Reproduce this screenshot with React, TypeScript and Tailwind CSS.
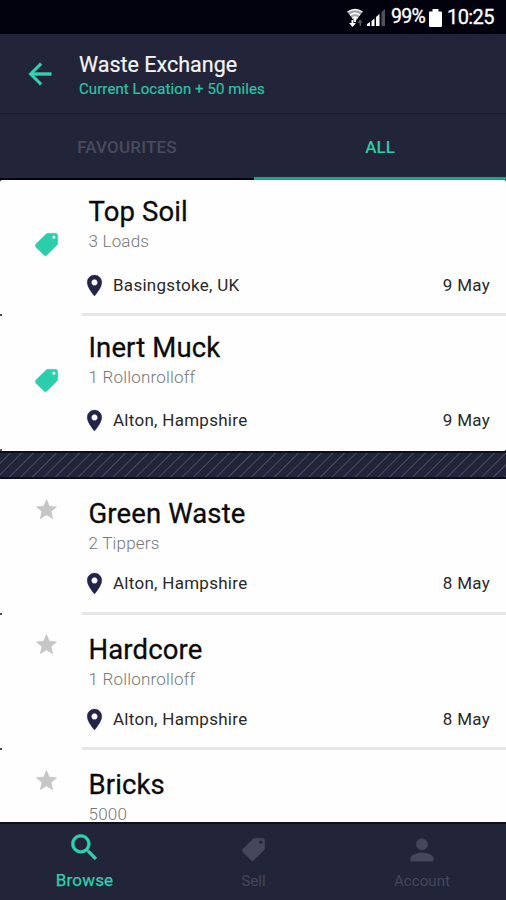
import React from 'react';

const ARROW = 'M20 11H7.83l5.59-5.59L12 4l-8 8 8 8 1.41-1.41L7.83 13H20v-2z';
const TAG =
  'M21.41 11.58l-9-9C12.05 2.22 11.55 2 11 2H4c-1.1 0-2 .9-2 2v7c0 .55.22 1.05.59 1.42l9 9c.36.36.86.58 1.41.58.55 0 1.05-.22 1.41-.59l7-7c.37-.36.59-.86.59-1.41 0-.55-.23-1.06-.59-1.42zM5.5 7C4.67 7 4 6.33 4 5.5S4.67 4 5.5 4 7 4.67 7 5.500 6.33 7 5.5 7z';
const PIN =
  'M12 2C8.13 2 5 5.13 5 9c0 5.25 7 13 7 13s7-7.75 7-13c0-3.87-3.13-7-7-7zm0 10c-1.660 0-3-1.340-3-3s1.340-3 3-3 3 1.340 3 3-1.340 3-3 3z';
const STAR = 'M12 17.27L18.18 21l-1.64-7.03L22 9.24l-7.19-.61L12 2 9.19 8.63 2 9.24l5.46 4.73L5.82 21z';
const SEARCH =
  'M15.5 14h-.79l-.28-.27C15.41 12.59 16 11.11 16 9.5 16 5.91 13.09 3 9.5 3S3 5.91 3 9.5 5.91 16 9.5 16c1.61 0 3.09-.59 4.23-1.57l.27.28v.79l5 4.99L20.49 19l-4.99-5zm-6 0C7.01 14 5 11.99 5 9.5S7.01 5 9.5 5 14 7.01 14 9.5 11.99 14 9.5 14z';
const PERSON =
  'M12 12c2.21 0 4-1.79 4-4s-1.79-4-4-4-4 1.79-4 4 1.79 4 4 4zm0 2c-2.67 0-8 1.34-8 4v2h16v-2c0-2.66-5.33-4-8-4z';

function Icon({ d, className }: { d: string; className: string }) {
  return (
    <svg viewBox="0 0 24 24" fill="currentColor" stroke="currentColor" strokeWidth="0.3" className={className}>
      <path d={d} />
    </svg>
  );
}

function StatusBar() {
  return (
    <div className="flex h-[34px] shrink-0 items-center justify-end bg-[#02020f] pr-[11px] text-white">
      <svg viewBox="0 0 18 20" className="mt-[2px] mr-[2px] h-[20px] w-[18px]">
        <path d="M1.5 4Q9-1 16.500 4L9 14Z" fill="#a5a5ad" />
        <path d="M1.500 4Q9-1 16.500 4M4 7.200Q9 3.500 14 7.200M6.300 10.300Q9 8 11.700 10.300" fill="none" stroke="#fff" strokeWidth="1.500" />
        <path d="M9 10v4" stroke="#fff" strokeWidth="2" />
        <path d="M5.500 12v3H3l3.500 4 3.500-4H7.500v-3z" fill="#fff" />
        <path d="M13.500 18v-3H11.500l2.500-4 2.500 4H15v3z" fill="#54545e" />
      </svg>
      <svg viewBox="0 0 20 18" className="mt-[2px] mr-[5px] h-[18px] w-[20px]">
        <path d="M1 17v-2l3-2v4zM5.500 17v-5l3-2.500V17zM10 17V8l3.500-3v12z" fill="#fff" />
        <path d="M15.500 17V3l3.500-3v17z" fill="#50505a" />
      </svg>
      <span className="mr-[3px] w-[35px] whitespace-nowrap text-[19.500px] leading-[38px] tracking-[-0.700px] [-webkit-text-stroke:0.300px_white]">99%</span>
      <svg viewBox="0 0 13 18" className="mt-[2px] mr-[5px] h-[18px] w-[13px]">
        <path d="M3.500 0h6v2.500h2.500q1 0 1 1V17q0 1-1 1H1q-1 0-1-1V3.500q0-1 1-1h2.500z" fill="#fff" />
      </svg>
      <span className="w-[48px] whitespace-nowrap text-[20px] leading-[38px] tracking-[-0.600px] [-webkit-text-stroke:0.300px_white]">10:25</span>
    </div>
  );
}

type Listing = { title: string; amount: string; place?: string; date?: string };

function Row({ item, saved, divider = true }: { item: Listing; saved?: boolean; divider?: boolean }) {
  return (
    <div className="flex h-[135.5px] shrink-0 bg-[#fefefe]">
      <div className="flex w-[82px] shrink-0 flex-col pl-[33px]">
        {saved ? (
          <Icon d={TAG} className="mt-[51px] h-[27px] w-[27px] -scale-x-100 text-[#2bceab]" />
        ) : (
          <Icon d={STAR} className="ml-[1px] mt-[17.500px] h-[25px] w-[25px] text-[#c6c6c8]" />
        )}
        <div className="mt-auto -ml-[33px] h-[2px] w-[2px] bg-[#4b4b55]" />
      </div>
      <div className={divider ? 'flex min-w-0 grow flex-col border-b-[3px] border-[#e6e6e6]' : 'flex min-w-0 grow flex-col'}>
        <h2 className={`ml-[6.500px] whitespace-nowrap text-[27.500px] leading-[32px] tracking-[0.120px] text-[#0b0b0b] [-webkit-text-stroke:0.300px_#0b0b0b] ${saved ? 'mt-[16px]' : 'mt-[19px]'}`}>
          {item.title}
        </h2>
        <p className="ml-[6.500px] mt-[3px] whitespace-nowrap text-[17px] leading-[20px] tracking-[0.200px] font-light text-[#777777]">{item.amount}</p>
        {item.place && (
          <div className={`flex items-center pr-[16px] text-[17px] leading-[24px] tracking-[0.280px] text-[#292929] ${saved ? 'mt-[20.500px]' : 'mt-[17px]'}`}>
            <Icon d={PIN} className="mt-[1px] h-[25px] w-[25px] text-[#222547]" />
            <span className="ml-[6px] grow whitespace-nowrap">{item.place}</span>
            <span>{item.date}</span>
          </div>
        )}
      </div>
    </div>
  );
}

const saved: Listing[] = [
  { title: 'Top Soil', amount: '3 Loads', place: 'Basingstoke, UK', date: '9 May' },
  { title: 'Inert Muck', amount: '1 Rollonrolloff', place: 'Alton, Hampshire', date: '9 May' },
];
const others: Listing[] = [
  { title: 'Green Waste', amount: '2 Tippers', place: 'Alton, Hampshire', date: '8 May' },
  { title: 'Hardcore', amount: '1 Rollonrolloff', place: 'Alton, Hampshire', date: '8 May' },
  { title: 'Bricks', amount: '5000' },
];

export default function App() {
  return (
    <div className="flex h-[900px] w-[506px] flex-col overflow-hidden bg-[#222539] font-[Roboto,sans-serif]">
      <StatusBar />
      <header className="flex h-[80px] shrink-0 border-b border-[#1a1c2e]">
        <Icon d={ARROW} className="ml-[23px] mt-[22.500px] h-[34px] w-[34px] text-[#35d0b3]" />
        <div className="ml-[22px] mt-[17px] whitespace-nowrap">
          <h1 className="text-[21.500px] leading-[28px] text-[#f4f4f5] [-webkit-text-stroke:0.200px_#f4f4f5]">Waste Exchange</h1>
          <p className="text-[15px] leading-[20px] tracking-[0.080px] text-[#2bc4a5] [-webkit-text-stroke:0.200px_#2bc4a5]">Current Location + 50 miles</p>
        </div>
      </header>
      <nav className="flex h-[66px] shrink-0 text-center text-[17px] leading-[66px] font-medium">
        <div className="w-[254px] border-b-2 border-[#02030f] tracking-[0.200px] text-[#494b5d]">FAVOURITES</div>
        <div className="w-[252px] border-b-[3px] border-[#16a885] text-[#2ccbaa]">ALL</div>
      </nav>
      <main className="flex h-[642px] shrink-0 flex-col overflow-hidden">
        <section className="flex h-[271px] shrink-0 flex-col overflow-hidden rounded-[3px] bg-[#fefefe]">
          {saved.map((item, i) => <Row key={item.title} item={item} saved divider={i === 0} />)}
        </section>
        <div className="h-[28px] shrink-0 border-y-2 border-[#0c0e20] bg-[repeating-linear-gradient(135deg,#222539_0px,#222539_6.400px,#44475a_7px,#44475a_7.600px,#222539_8.150px)]" />
        <section className="flex shrink-0 flex-col rounded-t-[3px] bg-[#fefefe]">
          {others.map((item) => <Row key={item.title} item={item} />)}
        </section>
      </main>
      <footer className="flex h-[78px] shrink-0 border-t-2 border-[#0c0e20] text-[#45475b]">
        <div className="flex w-[169px] flex-col items-center text-[#30d0b0]">
          <Icon d={SEARCH} className="mt-[5.500px] h-[35px] w-[35px]" />
          <span className="text-[17px] leading-[24px] mt-[3.500px] tracking-[0.200px] [-webkit-text-stroke:0.250px_#30d0b0]">Browse</span>
        </div>
        <div className="flex w-[169px] flex-col items-center">
          <Icon d={TAG} className="mt-[12px] h-[27px] w-[27px] -scale-x-100" />
          <span className="mt-[6px] text-[15px] leading-[24px]">Sell</span>
        </div>
        <div className="flex w-[168px] flex-col items-center">
          <Icon d={PERSON} className="mt-[9px] h-[34px] w-[34px]" />
          <span className="mt-[2px] text-[15px] leading-[24px] tracking-[0.100px]">Account</span>
        </div>
      </footer>
    </div>
  );
}
